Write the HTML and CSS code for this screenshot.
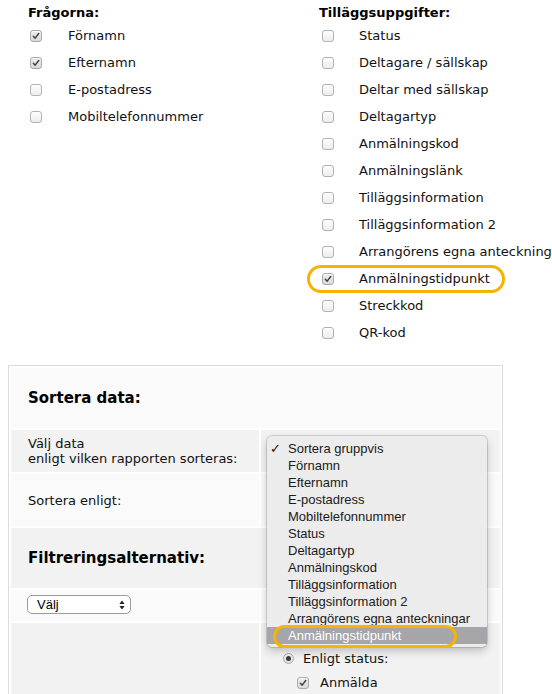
FILE: index.html
```html
<!DOCTYPE html>
<html lang="sv">
<head>
<meta charset="utf-8">
<title>Rapport</title>
<link rel="stylesheet" href="styles.css">
</head>
<body>
<div class="fields">
  <div class="col col-left">
    <div class="col-title">Frågorna:</div>
    <div class="opt"><span class="cb on"><svg viewBox="0 0 12 12"><path d="M2.8 6.2 L5 8.6 L9.3 3"/></svg></span><span>Förnamn</span></div>
    <div class="opt"><span class="cb on"><svg viewBox="0 0 12 12"><path d="M2.8 6.2 L5 8.6 L9.3 3"/></svg></span><span>Efternamn</span></div>
    <div class="opt"><span class="cb"></span><span>E-postadress</span></div>
    <div class="opt"><span class="cb"></span><span>Mobiltelefonnummer</span></div>
  </div>
  <div class="col col-right">
    <div class="col-title">Tilläggsuppgifter:</div>
    <div class="opt"><span class="cb"></span><span>Status</span></div>
    <div class="opt"><span class="cb"></span><span>Deltagare / sällskap</span></div>
    <div class="opt"><span class="cb"></span><span>Deltar med sällskap</span></div>
    <div class="opt"><span class="cb"></span><span>Deltagartyp</span></div>
    <div class="opt"><span class="cb"></span><span>Anmälningskod</span></div>
    <div class="opt"><span class="cb"></span><span>Anmälningslänk</span></div>
    <div class="opt"><span class="cb"></span><span>Tilläggsinformation</span></div>
    <div class="opt"><span class="cb"></span><span>Tilläggsinformation 2</span></div>
    <div class="opt"><span class="cb"></span><span class="nowrap">Arrangörens egna anteckningar</span></div>
    <div class="opt"><span class="cb on"><svg viewBox="0 0 12 12"><path d="M2.8 6.2 L5 8.6 L9.3 3"/></svg></span><span>Anmälningstidpunkt</span><span class="ring ring-big"></span></div>
    <div class="opt"><span class="cb"></span><span>Streckkod</span></div>
    <div class="opt"><span class="cb"></span><span>QR-kod</span></div>
  </div>
</div>

<div class="panel">
  <div class="section-title light">Sortera data:</div>

  <div class="cell dark label-cell h42">Välj data<br>enligt vilken rapporten sorteras:</div>
  <div class="cell dark h42 menu-host">
    <div class="menu">
      <div class="menu-item"><span class="tick">✓</span>Sortera gruppvis</div>
      <div class="menu-item">Förnamn</div>
      <div class="menu-item">Efternamn</div>
      <div class="menu-item">E-postadress</div>
      <div class="menu-item">Mobiltelefonnummer</div>
      <div class="menu-item">Status</div>
      <div class="menu-item">Deltagartyp</div>
      <div class="menu-item">Anmälningskod</div>
      <div class="menu-item">Tilläggsinformation</div>
      <div class="menu-item">Tilläggsinformation 2</div>
      <div class="menu-item">Arrangörens egna anteckningar</div>
      <div class="menu-item hl">Anmälningstidpunkt<span class="ring ring-small"></span></div>
    </div>
  </div>

  <div class="cell light label-cell h52">Sortera enligt:</div>
  <div class="cell light h52"></div>

  <div class="section-title dark">Filtreringsalternativ:</div>

  <div class="cell light h31 select-cell">
    <div class="select"><span>Välj</span><svg viewBox="0 0 6 10" class="arrows"><path d="M3 0.5 L5.6 4 L0.4 4 Z M3 9.5 L5.6 6 L0.4 6 Z"/></svg></div>
  </div>
  <div class="cell light h31"></div>

  <div class="cell dark h90"></div>
  <div class="cell dark h90 status-cell">
    <div class="radio-row"><span class="radio"><span class="dot"></span></span><span>Enligt status:</span></div>
    <div class="check-row"><span class="cb on"><svg viewBox="0 0 12 12"><path d="M2.8 6.2 L5 8.6 L9.3 3"/></svg></span><span>Anmälda</span></div>
  </div>
</div>
</body>
</html>
```

FILE: styles.css
```css
html, body {
  margin: 0;
  padding: 0;
  overflow: hidden;
  background: #fff;
}

body {
  font-family: "DejaVu Sans", Verdana, sans-serif;
  font-size: 13px;
  line-height: 15px;
  color: #111;
}

.fields {
  display: grid;
  grid-template-columns: 291px auto;
  padding: 5px 0 0 28px;
}

.col-title {
  font-weight: bold;
  height: 15px;
  margin-bottom: 2px;
  color: #000;
}

.opt {
  position: relative;
  display: flex;
  align-items: center;
  height: 27px;
  gap: 26px;
  padding-left: 2px;
  white-space: nowrap;
}

.col-right .opt {
  padding-left: 3px;
  gap: 25px;
}

.cb {
  flex: none;
  display: inline-block;
  width: 12px;
  height: 12px;
  box-sizing: border-box;
  border: 1px solid #b2b2b2;
  border-radius: 3px;
  background: linear-gradient(#fdfdfd, #ededed);
  box-shadow: inset 0 1px 0 #fff;
}

.cb.on {
  background: linear-gradient(#ececec, #dadada);
  border-color: #a9a9a9;
}

.cb svg {
  display: block;
  width: 10px;
  height: 10px;
}

.cb svg path {
  fill: none;
  stroke: #3d3d3d;
  stroke-width: 1.7;
  stroke-linecap: round;
  stroke-linejoin: round;
}

.ring {
  position: absolute;
  box-sizing: border-box;
  border: 3px solid #f6b400;
  pointer-events: none;
}

.ring-big {
  left: -12px;
  top: 0;
  width: 198px;
  height: 28px;
  border-radius: 14px;
}

.panel {
  margin: 19px 0 0 8px;
  width: 495px;
  box-sizing: border-box;
  border: 1px solid #dcdcdc;
  padding: 2px;
  display: grid;
  grid-template-columns: 248px 239px;
  gap: 2px;
  background: #fff;
}

.section-title {
  grid-column: 1 / -1;
  height: 60px;
  display: flex;
  align-items: center;
  padding-left: 17px;
  font-weight: bold;
  font-size: 15px;
  line-height: 18px;
  color: #000;
}

.light { background: #fafafa; }
.dark { background: #f2f2f2; }

.label-cell {
  display: flex;
  align-items: center;
  padding-left: 17px;
}

.h42 { height: 42px; }
.h52 { height: 52px; }
.h31 { height: 31px; }
.h90 { height: 90px; }

.menu-host {
  position: relative;
}

.menu {
  position: absolute;
  z-index: 2;
  left: 6px;
  top: 6px;
  width: 220px;
  padding: 4px 0 3px;
  background: #ececec;
  border-radius: 5px;
  box-shadow: 0 0 0 1px rgba(0, 0, 0, 0.13), 0 4px 9px rgba(0, 0, 0, 0.22);
  font-family: "Liberation Sans", Arial, sans-serif;
  font-size: 13px;
  line-height: 17px;
  color: #1b1b1b;
}

.menu-item {
  position: relative;
  height: 17px;
  padding-left: 21px;
  white-space: nowrap;
}

.menu-item.hl {
  background: #a5a5aa;
  color: #fff;
}

.tick {
  position: absolute;
  left: 3px;
  top: 0;
  font-family: "DejaVu Sans", sans-serif;
  font-size: 13px;
  font-weight: bold;
  color: #111;
}

.ring-small {
  left: 6px;
  top: -2px;
  width: 184px;
  height: 23px;
  border-radius: 12px;
}

.select-cell {
  padding: 5px 0 0 16px;
  box-sizing: border-box;
}

.select {
  width: 104px;
  height: 19px;
  box-sizing: border-box;
  border: 1px solid #9c9c9c;
  border-radius: 5px;
  background: #fff;
  display: flex;
  align-items: center;
  justify-content: space-between;
  padding: 0 5px 0 9px;
  font-family: "Liberation Sans", Arial, sans-serif;
  font-size: 13px;
  line-height: 15px;
  color: #000;
}

.arrows {
  width: 6px;
  height: 10px;
}

.arrows path {
  fill: #222;
}

.status-cell {
  padding: 28px 0 0 22px;
  box-sizing: border-box;
}

.radio-row {
  display: flex;
  align-items: center;
  gap: 9px;
  height: 15px;
  margin-bottom: 9px;
}

.radio {
  flex: none;
  width: 11px;
  height: 11px;
  box-sizing: border-box;
  border: 1px solid #aaa;
  border-radius: 50%;
  background: linear-gradient(#f4f4f4, #dedede);
  display: flex;
  align-items: center;
  justify-content: center;
}

.dot {
  width: 5px;
  height: 5px;
  border-radius: 50%;
  background: #3a3a3a;
}

.check-row {
  display: flex;
  align-items: center;
  gap: 11px;
  height: 15px;
  padding-left: 14px;
}
```
